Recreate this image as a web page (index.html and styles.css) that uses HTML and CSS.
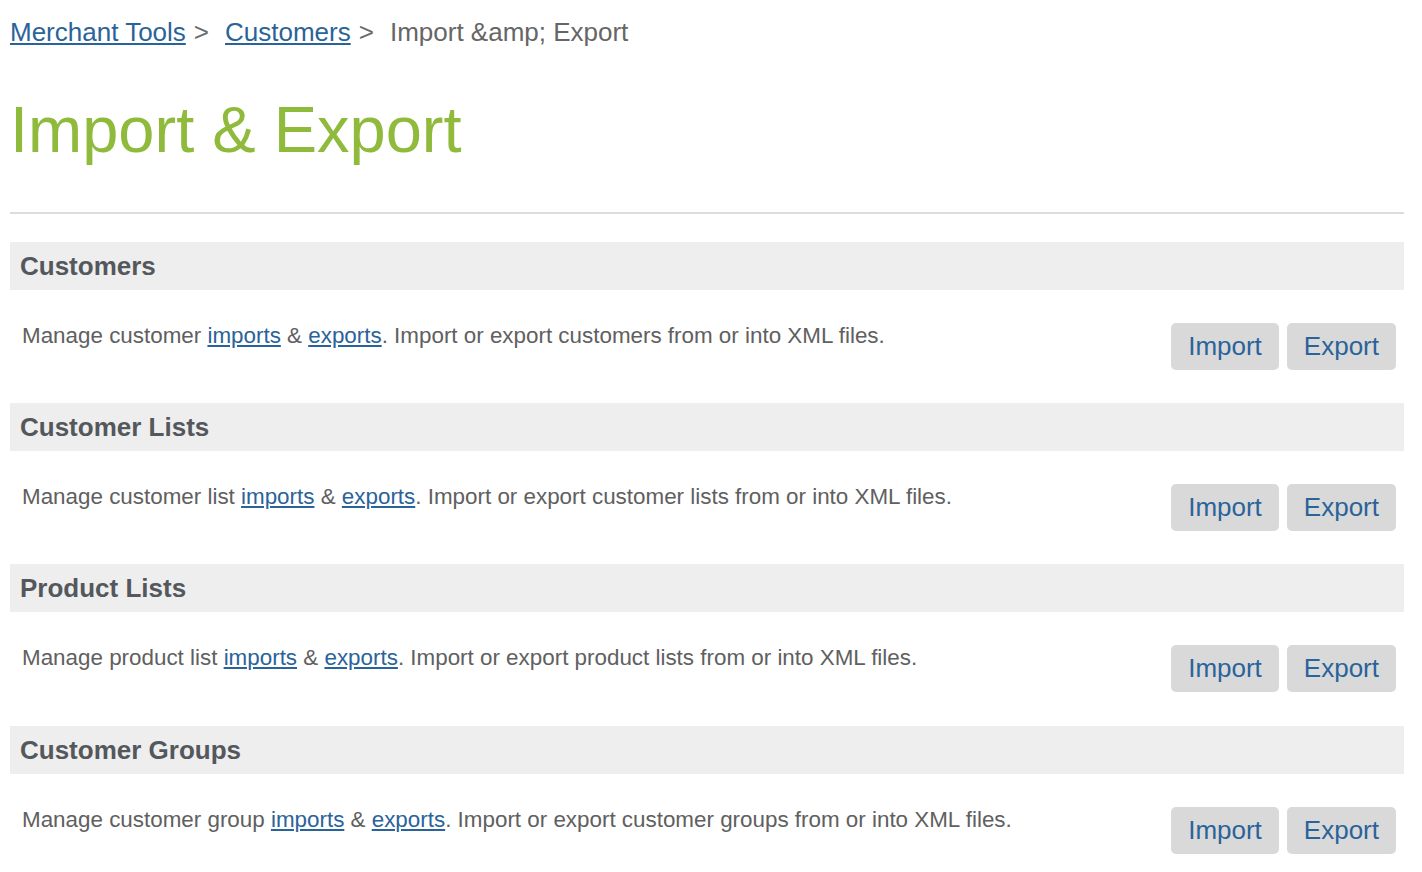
FILE: index.html
```html
<!DOCTYPE html>
<html lang="en">
<head>
<meta charset="utf-8">
<title>Import &amp; Export</title>
<link rel="stylesheet" href="styles.css">
</head>
<body>
<div class="page">
  <nav class="breadcrumb">
    <a href="#">Merchant Tools</a><span class="sep">&gt;</span><a href="#">Customers</a><span class="sep">&gt;</span><span class="current">Import &amp;amp; Export</span>
  </nav>
  <h1 class="title">Import &amp; Export</h1>
  <hr class="rule">

  <section class="block">
    <h2 class="block-head">Customers</h2>
    <div class="block-row">
      <p class="desc">Manage customer <a href="#">imports</a> &amp; <a href="#">exports</a>. Import or export customers from or into XML files.</p>
      <div class="actions"><button class="btn">Import</button><button class="btn">Export</button></div>
    </div>
  </section>

  <section class="block">
    <h2 class="block-head">Customer Lists</h2>
    <div class="block-row">
      <p class="desc">Manage customer list <a href="#">imports</a> &amp; <a href="#">exports</a>. Import or export customer lists from or into XML files.</p>
      <div class="actions"><button class="btn">Import</button><button class="btn">Export</button></div>
    </div>
  </section>

  <section class="block">
    <h2 class="block-head">Product Lists</h2>
    <div class="block-row">
      <p class="desc">Manage product list <a href="#">imports</a> &amp; <a href="#">exports</a>. Import or export product lists from or into XML files.</p>
      <div class="actions"><button class="btn">Import</button><button class="btn">Export</button></div>
    </div>
  </section>

  <section class="block">
    <h2 class="block-head">Customer Groups</h2>
    <div class="block-row">
      <p class="desc">Manage customer group <a href="#">imports</a> &amp; <a href="#">exports</a>. Import or export customer groups from or into XML files.</p>
      <div class="actions"><button class="btn">Import</button><button class="btn">Export</button></div>
    </div>
  </section>
</div>
</body>
</html>
```

FILE: styles.css
```css
html, body {
  margin: 0;
  padding: 0;
  background: #ffffff;
}

body {
  font-family: "Liberation Sans", Arial, Helvetica, sans-serif;
  color: #606060;
}

.page {
  padding: 17px 18px 0 10px;
}

a {
  color: #2a6399;
  text-decoration: underline;
}

.breadcrumb {
  font-size: 26px;
  line-height: 30px;
  color: #666666;
  white-space: nowrap;
}

.breadcrumb .sep {
  margin: 0 16px 0 8px;
  color: #6b6b6b;
}

.breadcrumb .current {
  color: #666666;
}

.title {
  margin: 45px 0 0 0;
  font-size: 65px;
  line-height: 75px;
  font-weight: normal;
  color: #8fba3b;
}

.rule {
  margin: 45px 0 0 0;
  border: 0;
  height: 2px;
  background: #dcdcdc;
}

.block:first-of-type {
  margin-top: 28px;
}

.block:last-of-type {
  margin-top: 1px;
}

.block-head {
  margin: 0;
  height: 48px;
  padding: 0 10px;
  background: #eeeeee;
  font-size: 26px;
  line-height: 48px;
  font-weight: bold;
  color: #54585c;
}

.block-row {
  display: flex;
  justify-content: space-between;
  align-items: flex-start;
  padding: 31px 8px 33px 12px;
}

.desc {
  margin: 0;
  font-size: 22.4px;
  line-height: 30px;
  color: #606060;
}

.actions {
  display: flex;
  gap: 8px;
  margin-top: 2px;
  flex-shrink: 0;
}

.btn {
  font-family: "Liberation Sans", Arial, Helvetica, sans-serif;
  font-size: 26px;
  line-height: 31px;
  height: 47px;
  padding: 8px 17px;
  border: 0;
  border-radius: 5px;
  background: #d9d9d9;
  color: #2a6399;
  cursor: pointer;
}
```
